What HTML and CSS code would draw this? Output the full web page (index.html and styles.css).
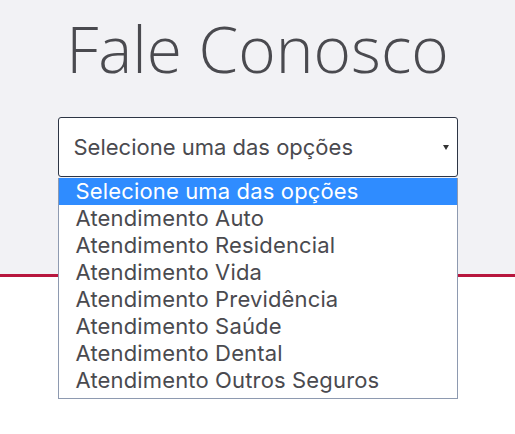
FILE: index.html
```html
<!DOCTYPE html>
<html lang="pt-BR">
<head>
<meta charset="utf-8">
<title>Fale Conosco</title>
<link rel="stylesheet" href="styles.css">
</head>
<body>
<section class="hero">
  <h1 class="title">Fale Conosco</h1>
  <div class="field">
    <div class="select">
      <span class="select-text">Selecione uma das opções</span>
      <span class="caret"></span>
    </div>
    <ul class="options">
      <li class="option active">Selecione uma das opções</li>
      <li class="option">Atendimento Auto</li>
      <li class="option">Atendimento Residencial</li>
      <li class="option">Atendimento Vida</li>
      <li class="option">Atendimento Previdência</li>
      <li class="option">Atendimento Saúde</li>
      <li class="option">Atendimento Dental</li>
      <li class="option">Atendimento Outros Seguros</li>
    </ul>
  </div>
</section>
<section class="content"></section>
</body>
</html>
```
FILE: styles.css
```css
html, body {
  margin: 0;
  padding: 0;
  background: #ffffff;
  font-family: "Open Sans", "Noto Sans", sans-serif;
  color: #4a4a4f;
}
.hero {
  height: 274px;
  background: #f2f2f5;
  border-bottom: 3px solid #b8173e;
  display: flex;
  flex-direction: column;
  align-items: center;
}
.title {
  margin: 9px 0 0;
  font-size: 64px;
  font-weight: 300;
  line-height: 80px;
  color: #4a4a4f;
}
.field {
  position: relative;
  width: 400px;
  margin-top: 28px;
}
.select {
  height: 60px;
  box-sizing: border-box;
  border: 1px solid #2d3545;
  border-radius: 3px;
  background: #ffffff;
  display: flex;
  align-items: center;
  padding: 0 8px 0 15px;
}
.select-text {
  flex: 1;
  font-family: "Inter", "Open Sans", sans-serif;
  font-size: 22px;
  color: #4a4a4f;
}
.caret {
  width: 0;
  height: 0;
  border-left: 3px solid transparent;
  border-right: 3px solid transparent;
  border-top: 5px solid #333;
}
.options {
  position: absolute;
  left: 0;
  top: 61px;
  width: 400px;
  box-sizing: border-box;
  margin: 0;
  padding: 0 0 4px;
  list-style: none;
  background: #ffffff;
  border: 1px solid #8e9ab0;
  border-top: none;
}
.option {
  height: 27px;
  line-height: 27px;
  padding-left: 17px;
  font-family: "Inter", "Open Sans", sans-serif;
  font-size: 22px;
  letter-spacing: 0.15px;
  color: #4a4a4f;
  white-space: nowrap;
}
.option.active {
  background: #2f8cff;
  color: #ffffff;
}
.content {
  height: 157px;
}
```
